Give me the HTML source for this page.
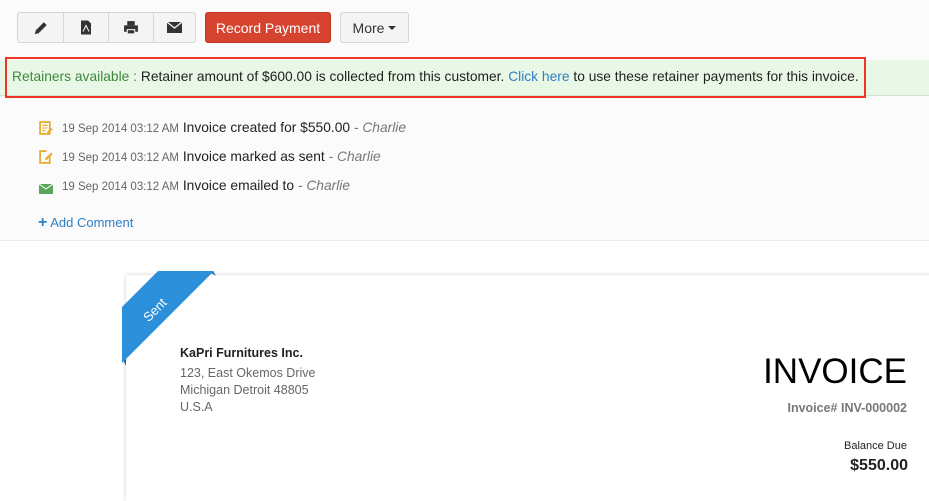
<!DOCTYPE html>
<html style="width:929px;height:501px;overflow:hidden"><head><style>
body{margin:0;width:929px;height:501px;overflow:hidden;background:#fff;font-family:"Liberation Sans",sans-serif;position:relative}
.a{position:absolute}
.btn{position:absolute;top:12px;height:31px;border:1px solid #d6d6d6;background:#f4f4f4;box-sizing:border-box;display:flex;align-items:center;justify-content:center}
</style></head><body>
<div class="a" style="left:0;top:0;width:929px;height:240px;background:#fbfbfb"></div>
<div class="a" style="left:0;top:240px;width:929px;height:1px;background:#ececec"></div>
<div class="btn" style="left:17px;width:179px;border-radius:3px;justify-content:flex-start;padding:0">
 <div style="width:45px;height:100%;border-right:1px solid #d6d6d6;display:flex;align-items:center;justify-content:center"><svg width="16" height="16" viewBox="0 0 14 14"><path d="M1.5 12.5l1-3.5 7-7 2.5 2.5-7 7z" fill="#333"/></svg></div>
 <div style="width:44px;height:100%;border-right:1px solid #d6d6d6;display:flex;align-items:center;justify-content:center"><svg width="12" height="15" viewBox="0 0 12 14"><path d="M1 0h7l3 3v11H1z" fill="#333"/><path d="M3 11l3-6 3 6" stroke="#fff" fill="none"/></svg></div>
 <div style="width:44px;height:100%;border-right:1px solid #d6d6d6;display:flex;align-items:center;justify-content:center"><svg width="16" height="15" viewBox="0 0 15 14"><rect x="4" y="1" width="7" height="4" fill="#333"/><rect x="1" y="5" width="13" height="6" fill="#333"/><rect x="4" y="9" width="7" height="4" fill="#333" stroke="#f4f4f4"/></svg></div>
 <div style="flex:1;height:100%;display:flex;align-items:center;justify-content:center"><svg width="15" height="11" viewBox="0 0 15 11"><rect width="15" height="11" fill="#333"/><path d="M0 0l7.5 6L15 0" stroke="#f4f4f4" fill="none" stroke-width="1.3"/></svg></div>
</div>
<div class="btn" style="left:205px;width:126px;background:#d6432f;border-color:#c33a27;border-radius:3px;color:#fff;font-size:14px">Record Payment</div>
<div class="btn" style="left:340px;width:69px;border-radius:3px;color:#333;font-size:14px">More <span style="display:inline-block;margin-left:4px;border-left:4px solid transparent;border-right:4px solid transparent;border-top:4px solid #333"></span></div>
<div class="a" style="left:0;top:60px;width:929px;height:35px;background:#e9f7e6;border-bottom:1px solid #cfe8c9"></div>
<div class="a" style="left:5px;top:57px;width:857px;height:37px;border:2px solid #ee3528"></div>
<div class="a" style="left:12px;top:69px;font-size:13.8px;color:#222;white-space:nowrap"><span style="color:#3d8a3d">Retainers available :</span> Retainer amount of $600.00 is collected from this customer. <span style="color:#2e7fc4">Click here</span> to use these retainer payments for this invoice.</div>

<div class="a" style="left:39px;top:121px"><svg width="14" height="14" viewBox="0 0 13 13"><rect x="1" y="1" width="9" height="11" fill="none" stroke="#e9a92c" stroke-width="1.6"/><path d="M3 4h5M3 6.5h5M3 9h3" stroke="#e9a92c"/><path d="M8 11l4-4" stroke="#e9a92c" stroke-width="2"/></svg></div>
<div class="a" style="left:39px;top:150px"><svg width="14" height="14" viewBox="0 0 13 13"><path d="M7 1H1v11h9V6" fill="none" stroke="#e9a92c" stroke-width="1.6"/><path d="M6 9l6-6" stroke="#e9a92c" stroke-width="2"/></svg></div>
<div class="a" style="left:39px;top:181px"><svg width="14" height="10" viewBox="0 0 14 10"><rect width="14" height="10" fill="#5aa55a"/><path d="M0 0l7 5 7-5" stroke="#fff" fill="none"/></svg></div>
<div class="a" style="left:62px;top:120px;font-size:13.8px;color:#222;white-space:nowrap;line-height:16px"><span style="font-size:11.5px;color:#666">19 Sep 2014 03:12 AM</span> Invoice created for $550.00 <i style="color:#777">- Charlie</i></div>
<div class="a" style="left:62px;top:149px;font-size:13.8px;color:#222;white-space:nowrap;line-height:16px"><span style="font-size:11.5px;color:#666">19 Sep 2014 03:12 AM</span> Invoice marked as sent <i style="color:#777">- Charlie</i></div>
<div class="a" style="left:62px;top:178px;font-size:13.8px;color:#222;white-space:nowrap;line-height:16px"><span style="font-size:11.5px;color:#666">19 Sep 2014 03:12 AM</span> Invoice emailed to <i style="color:#777">- Charlie</i></div>
<div class="a" style="left:38px;top:214px;font-size:13px;color:#2e7fc4"><b style="font-size:16px">+</b> Add Comment</div>

<div class="a" style="left:126px;top:275px;width:820px;height:226px;background:#fff;box-shadow:0 0 4px rgba(0,0,0,.18)"></div>
<svg class="a" style="left:0;top:0" width="929" height="501"><polygon points="208,271 216,276 213,271" fill="#1d6aa8"/><polygon points="122,358 126,366 126,358" fill="#1d6aa8"/><polygon points="158,271 214,271 122,363 122,307" fill="#2b90d9"/><text x="158" y="313" fill="#fff" font-size="13" font-family="Liberation Sans" text-anchor="middle" transform="rotate(-45 158 313)">Sent</text></svg>
<div class="a" style="left:180px;top:346px;font-size:12.5px;font-weight:bold;color:#222">KaPri Furnitures Inc.</div>
<div class="a" style="left:180px;top:365px;font-size:12.5px;color:#666;line-height:17px">123, East Okemos Drive<br>Michigan Detroit 48805<br>U.S.A</div>
<div class="a" style="right:22px;top:352px;font-size:35px;color:#000">INVOICE</div>
<div class="a" style="right:22px;top:401px;font-size:12.5px;color:#777;font-weight:bold">Invoice# INV-000002</div>
<div class="a" style="right:22px;top:440px;font-size:11px;color:#222">Balance Due</div>
<div class="a" style="right:21px;top:457px;font-size:16px;font-weight:bold;color:#222">$550.00</div>
</body></html>
